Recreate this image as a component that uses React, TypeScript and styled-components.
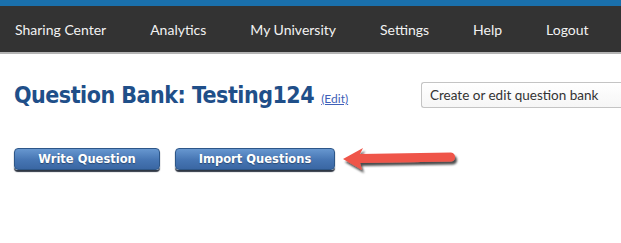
import React from "react"
import styled, { createGlobalStyle } from "styled-components"

const GlobalStyle = createGlobalStyle`
    body {
        margin: 0;
        background: #fff;
        overflow: hidden;
        font-family: "Lato", "Liberation Sans", sans-serif;
    }
`

const TopStripe = styled.div`
    height: 6px;
    background: #1a70ac;
`

const NavBar = styled.nav`
    height: 46px;
    background: #333333;
    border-bottom: 2px solid #b4b4b4;
    display: flex;
    align-items: center;
    gap: 44px;
    padding-left: 15px;
`

const NavItem = styled.a`
    color: #f2f2f2;
    font-size: 14px;
    text-decoration: none;
    white-space: nowrap;
`

const Main = styled.main`
    padding: 0 14px;
`

const HeaderRow = styled.div`
    display: grid;
    grid-template-columns: 407px 200px;
    align-items: center;
    margin-top: 27px;
    margin-right: -14px;
    overflow: hidden;
`

const TitleLine = styled.div`
    display: flex;
    align-items: baseline;
    gap: 7px;
    white-space: nowrap;
`

const Title = styled.h1`
    margin: 0;
    font-family: "DejaVu Sans Condensed", "DejaVu Sans", sans-serif;
    font-stretch: condensed;
    font-weight: bold;
    font-size: 23px;
    letter-spacing: -0.5px;
    line-height: 28px;
    color: #1f4f89;
`

const EditLink = styled.a`
    font-size: 12px;
    color: #4060b8;
    text-decoration: underline;
`

const Select = styled.div`
    height: 24px;
    border: 1px solid #c4c4c4;
    border-right: none;
    border-radius: 3px 0 0 3px;
    background: linear-gradient(#ffffff, #f6f6f6);
    display: flex;
    align-items: center;
    padding-left: 8px;
    font-size: 13.5px;
    color: #333;
    white-space: nowrap;
`

const ButtonRow = styled.div`
    display: flex;
    align-items: center;
    gap: 15px;
    margin-top: 34px;
`

const BlueButton = styled.button<{ $width: number }>`
    width: ${p => p.$width}px;
    height: 22px;
    padding: 0;
    border: 1px solid #2d5688;
    border-radius: 4px;
    background: linear-gradient(#6797cf, #4675b3 55%, #3a67a3);
    box-shadow: 0 2px 1px rgba(10, 20, 35, 0.85);
    color: #fff;
    font-family: "DejaVu Sans", sans-serif;
    font-weight: bold;
    font-size: 11.5px;
    text-shadow: 0 1px 1px rgba(0, 0, 0, 0.35);
    cursor: pointer;
`

const Arrow = styled.svg`
    margin-left: -11px;
    margin-top: 2px;
`

const App = () => {
    return (
        <>
            <GlobalStyle />
            <TopStripe />
            <NavBar>
                <NavItem>Sharing Center</NavItem>
                <NavItem>Analytics</NavItem>
                <NavItem>My University</NavItem>
                <NavItem>Settings</NavItem>
                <NavItem>Help</NavItem>
                <NavItem>Logout</NavItem>
            </NavBar>
            <Main>
                <HeaderRow>
                    <TitleLine>
                        <Title>Question Bank: Testing124</Title>
                        <EditLink href="#">(Edit)</EditLink>
                    </TitleLine>
                    <Select>Create or edit question bank</Select>
                </HeaderRow>
                <ButtonRow>
                    <BlueButton $width={146}>Write Question</BlueButton>
                    <BlueButton $width={160}>Import Questions</BlueButton>
                    <Arrow width="124" height="30" viewBox="0 0 124 30">
                        <defs>
                            <filter id="arrowShadow" x="-10%" y="-30%" width="130%" height="180%">
                                <feDropShadow dx="2" dy="3" stdDeviation="1.3" floodColor="#000" floodOpacity="0.7" />
                            </filter>
                        </defs>
                        <path
                            d="M4 14 L24 3 L21 9 L112 7.5 Q116 8 116 12 Q116 16 112 16.5 L21 18 L23 25 Z"
                            fill="#ef5449"
                            filter="url(#arrowShadow)"
                        />
                    </Arrow>
                </ButtonRow>
            </Main>
        </>
    )
}

export default App
